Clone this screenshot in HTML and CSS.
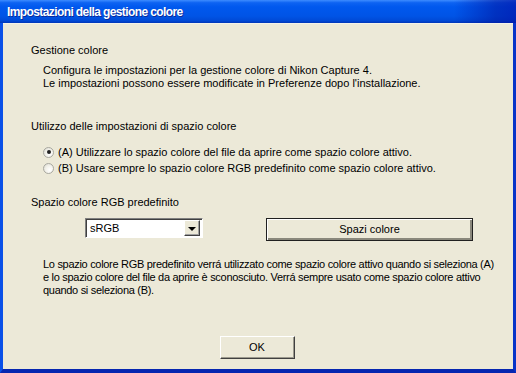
FILE: index.html
```html
<!DOCTYPE html>
<html lang="it">
<head>
    <meta charset="UTF-8">
    <title>Impostazioni della gestione colore</title>
    <link rel="stylesheet" href="styles.css">
</head>
<body>
    <div class="window">
        <div class="title-bar">
            <span class="title-text">Impostazioni della gestione colore</span>
        </div>

        <div class="client">
            <div class="group-label">Gestione colore</div>
            <div class="intro">
                <div>Configura le impostazioni per la gestione colore di Nikon Capture 4.</div>
                <div>Le impostazioni possono essere modificate in Preferenze dopo l'installazione.</div>
            </div>

            <div class="group-label usage-label">Utilizzo delle impostazioni di spazio colore</div>
            <div class="radios">
                <div class="radio-row">
                    <span class="radio checked"></span>
                    <span>(A) Utilizzare lo spazio colore del file da aprire come spazio colore attivo.</span>
                </div>
                <div class="radio-row">
                    <span class="radio"></span>
                    <span>(B) Usare sempre lo spazio colore RGB predefinito come spazio colore attivo.</span>
                </div>
            </div>

            <div class="group-label rgb-label">Spazio colore RGB predefinito</div>
            <div class="rgb-row">
                <div class="combo">
                    <span class="combo-value">sRGB</span>
                    <span class="combo-arrow"><span class="triangle"></span></span>
                </div>
                <div class="button wide default">Spazi colore</div>
            </div>

            <div class="note">
                <div>Lo spazio colore RGB predefinito verrá utilizzato come spazio colore attivo quando si seleziona (A)</div>
                <div>e lo spazio colore del file da aprire è sconosciuto. Verrá sempre usato come spazio colore attivo</div>
                <div>quando si seleziona (B).</div>
            </div>

            <div class="footer">
                <div class="button ok">OK</div>
            </div>
        </div>
    </div>
</body>
</html>
```

FILE: styles.css
```css
body {
    margin: 0;
    width: 516px;
    height: 373px;
    overflow: hidden;
    font-family: 'Liberation Sans', Arial, sans-serif;
    font-size: 11px;
    color: #000;
}
.window {
    width: 516px;
    height: 373px;
    box-sizing: border-box;
    background: #0a4be6;
    display: flex;
    flex-direction: column;
    border-left: 3px solid #0a50e8;
    border-right: 3px solid #0733c8;
    border-bottom: 4px solid #0626b0;
}
.title-bar {
    height: 23px;
    margin: 0 -3px;
    padding-left: 7px;
    display: flex;
    align-items: center;
    background:
        linear-gradient(to right, rgba(0,0,0,0) 0%, rgba(0,0,0,0) 88%, rgba(0,20,160,0.55) 96%, rgba(0,20,170,0.7) 100%),
        linear-gradient(to bottom, #3d8cff 0%, #0d63f2 12%, #0058ee 30%, #0054e6 70%, #0049d6 90%, #0036b8 100%);
}
.title-text {
    color: #fff;
    font-weight: bold;
    font-size: 12px;
    letter-spacing: -0.6px;
    text-shadow: 1px 1px 0 #0a2a9a;
}
.client {
    flex: 1;
    background: #ece9d8;
    border-top: 1px solid #f4f2e8;
    padding: 20px 0 10px 28px;
    display: flex;
    flex-direction: column;
    line-height: 13px;
}
.intro {
    margin: 7px 0 0 12px;
}
.usage-label {
    margin-top: 30px;
}
.radios {
    margin: 11px 0 0 12px;
}
.radio-row {
    height: 16px;
    display: flex;
    align-items: center;
    gap: 2px;
}
.radio {
    width: 11px;
    height: 11px;
    box-sizing: border-box;
    border-radius: 50%;
    border: 1px solid #a8a8a0;
    background: radial-gradient(circle at 65% 65%, #ffffff 0%, #f2f1ea 50%, #d8d6cc 100%);
    display: flex;
    align-items: center;
    justify-content: center;
    margin-right: 2px;
}
.radio.checked::after {
    content: "";
    width: 4px;
    height: 4px;
    border-radius: 50%;
    background: #222;
}
.rgb-label {
    margin-top: 20px;
}
.rgb-row {
    margin-top: 9px;
    display: flex;
    align-items: flex-start;
    gap: 63px;
    padding-left: 54px;
}
.combo {
    width: 118px;
    height: 20px;
    box-sizing: border-box;
    background: #fff;
    border-top: 1px solid #808080;
    border-left: 1px solid #808080;
    border-right: 1px solid #ffffff;
    border-bottom: 1px solid #ffffff;
    box-shadow: inset 1px 1px 0 #404040;
    display: flex;
    align-items: center;
    justify-content: space-between;
    padding: 2px 2px 2px 4px;
}
.combo-arrow {
    width: 16px;
    height: 16px;
    box-sizing: border-box;
    background: #ece9d8;
    border-top: 1px solid #fff;
    border-left: 1px solid #fff;
    border-right: 1px solid #404040;
    border-bottom: 1px solid #404040;
    box-shadow: inset -1px -1px 0 #a0a0a0;
    display: flex;
    align-items: center;
    justify-content: center;
}
.triangle {
    width: 0;
    height: 0;
    border-left: 4px solid transparent;
    border-right: 4px solid transparent;
    border-top: 4px solid #000;
    margin-top: 1px;
}
.button {
    height: 23px;
    box-sizing: border-box;
    background: #ece9d8;
    border-top: 1px solid #ffffff;
    border-left: 1px solid #ffffff;
    border-right: 1px solid #404040;
    border-bottom: 1px solid #404040;
    box-shadow: inset -1px -1px 0 #9c9a8e;
    display: flex;
    align-items: center;
    justify-content: center;
}
.button.wide {
    width: 207px;
}
.button.default {
    border: 1px solid #202020;
    box-shadow: inset 1px 1px 0 #ffffff, inset -2px -2px 0 #8a887c;
}
.note {
    margin: 17px 0 0 12px;
    white-space: nowrap;
    letter-spacing: -0.3px;
}
.footer {
    margin-top: auto;
    display: flex;
    justify-content: center;
    padding-right: 30px;
}
.button.ok {
    width: 75px;
}
```
